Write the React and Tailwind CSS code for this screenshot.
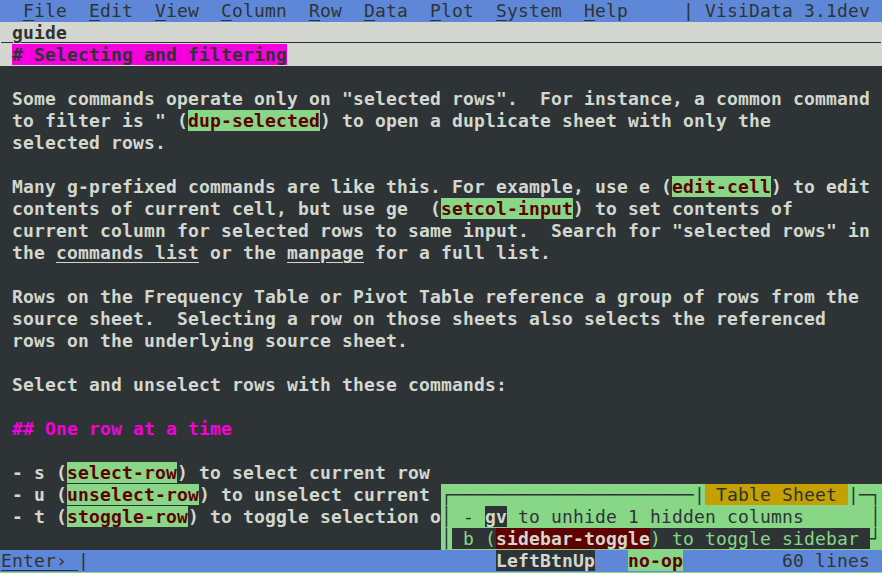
import React from 'react';

// terminal palette
const DARK = 'bg-[#2e3436]';
const GREEN = 'bg-[#87d787]';

function Line({ className = '', children }) {
  return <div className={`h-[22px] whitespace-pre pl-px ${className}`}>{children}</div>;
}

function Cmd({ children }) {
  return <span className="bg-[#87d787] text-[#5f0000]">{children}</span>;
}

function Menu({ label }) {
  return (
    <span>
      <span className="underline underline-offset-[3px]">{label[0]}</span>
      {label.slice(1)}
    </span>
  );
}

const menus = ['File', 'Edit', 'View', 'Column', 'Row', 'Data', 'Plot', 'System', 'Help'];

export default function App() {
  return (
    <div className="w-[882px] h-[573px] overflow-hidden bg-[#2e3436] text-[#d3d7cf] font-[family-name:'DejaVu_Sans_Mono','Liberation_Mono',monospace] text-[18px] leading-[22px] tracking-[0.162px]">
      {/* MENU BAR */}
      <Line className="bg-[#5f87d7] text-[#2e3436]">
        {'  '}
        {menus.map((m, i) => (
          <span key={m}>
            <Menu label={m} />
            {i < menus.length - 1 ? '  ' : ''}
          </span>
        ))}
        {'     | VisiData 3.1dev'}
      </Line>

      {/* SHEET TITLE */}
      <Line className="bg-[#d3d7cf] text-[#2e3436] font-bold">
        <span className="underline decoration-[#2e3436] underline-offset-[3px]">{' guide'.padEnd(80, ' ')}</span>
      </Line>
      <Line className="bg-[#d3d7cf] text-[#2e3436] font-bold">
        {' '}
        <span className="bg-[#f500dc]">{'# Selecting and filtering'}</span>
      </Line>

      {/* GUIDE BODY */}
      <div className="font-bold">
        <Line> </Line>
        <Line>{' Some commands operate only on "selected rows".  For instance, a common command'}</Line>
        <Line>
          {' to filter is " ('}
          <Cmd>dup-selected</Cmd>
          {') to open a duplicate sheet with only the'}
        </Line>
        <Line>{' selected rows.'}</Line>
        <Line> </Line>
        <Line>
          {' Many g-prefixed commands are like this. For example, use e ('}
          <Cmd>edit-cell</Cmd>
          {') to edit'}
        </Line>
        <Line>
          {' contents of current cell, but use ge  ('}
          <Cmd>setcol-input</Cmd>
          {') to set contents of'}
        </Line>
        <Line>{' current column for selected rows to same input.  Search for "selected rows" in'}</Line>
        <Line>
          {' the '}
          <span className="underline underline-offset-[3px]">commands list</span>
          {' or the '}
          <span className="underline underline-offset-[3px]">manpage</span>
          {' for a full list.'}
        </Line>
        <Line> </Line>
        <Line>{' Rows on the Frequency Table or Pivot Table reference a group of rows from the'}</Line>
        <Line>{' source sheet.  Selecting a row on those sheets also selects the referenced'}</Line>
        <Line>{' rows on the underlying source sheet.'}</Line>
        <Line> </Line>
        <Line>{' Select and unselect rows with these commands:'}</Line>
        <Line> </Line>
        <Line className="text-[#f500dc]">{' ## One row at a time'}</Line>
        <Line> </Line>
        <Line>
          {' - s ('}
          <Cmd>select-row</Cmd>
          {') to select current row'}
        </Line>

        {/* rows partly covered by the sidebar popup */}
        <div className="flex">
          <div className="w-[441px] shrink-0">
            <Line>
              {' - u ('}
              <Cmd>unselect-row</Cmd>
              {') to unselect current '}
            </Line>
            <Line>
              {' - t ('}
              <Cmd>stoggle-row</Cmd>
              {') to toggle selection o'}
            </Line>
            <Line> </Line>
          </div>
          <div className={`flex-1 ${GREEN} text-[#2e3436] font-normal`}>
            <div className="h-[22px] whitespace-pre">
              {'┌' + '─'.repeat(22) + '|'}
              <span className="bg-[#c4a000]">{' Table Sheet '}</span>
              {'|─┐'}
            </div>
            <div className="h-[22px] whitespace-pre">
              {'│ - '}
              <span className={`${DARK} text-[#d3d7cf] font-bold`}>gv</span>
              {' to unhide 1 hidden columns      │'}
            </div>
            <div className="h-[22px] whitespace-pre">
              {'│'}
              <span className={`${DARK} text-[#87d787] underline decoration-[#87d787] underline-offset-[4px]`}>
                {' b ('}
                <span className="bg-[#5f0000] text-[#d3d7cf] font-bold">sidebar-toggle</span>
                {') to toggle sidebar '}
              </span>
              {'┘'}
            </div>
          </div>
        </div>
      </div>

      {/* STATUS BAR */}
      <Line className="bg-[#5f87d7] text-[#2e3436]">
        <span className="underline underline-offset-[3px]">{'Enter› '}</span>
        {'|' + ' '.repeat(37)}
        <span className={`${DARK} text-[#d3d7cf] font-bold`}>LeftBtnUp</span>
        {'   '}
        <span className="bg-[#87d787] text-[#5f0000] font-bold">no-op</span>
        {' '.repeat(9) + '60 lines'}
      </Line>
      <div className={`h-px ${GREEN}`} />
    </div>
  );
}
